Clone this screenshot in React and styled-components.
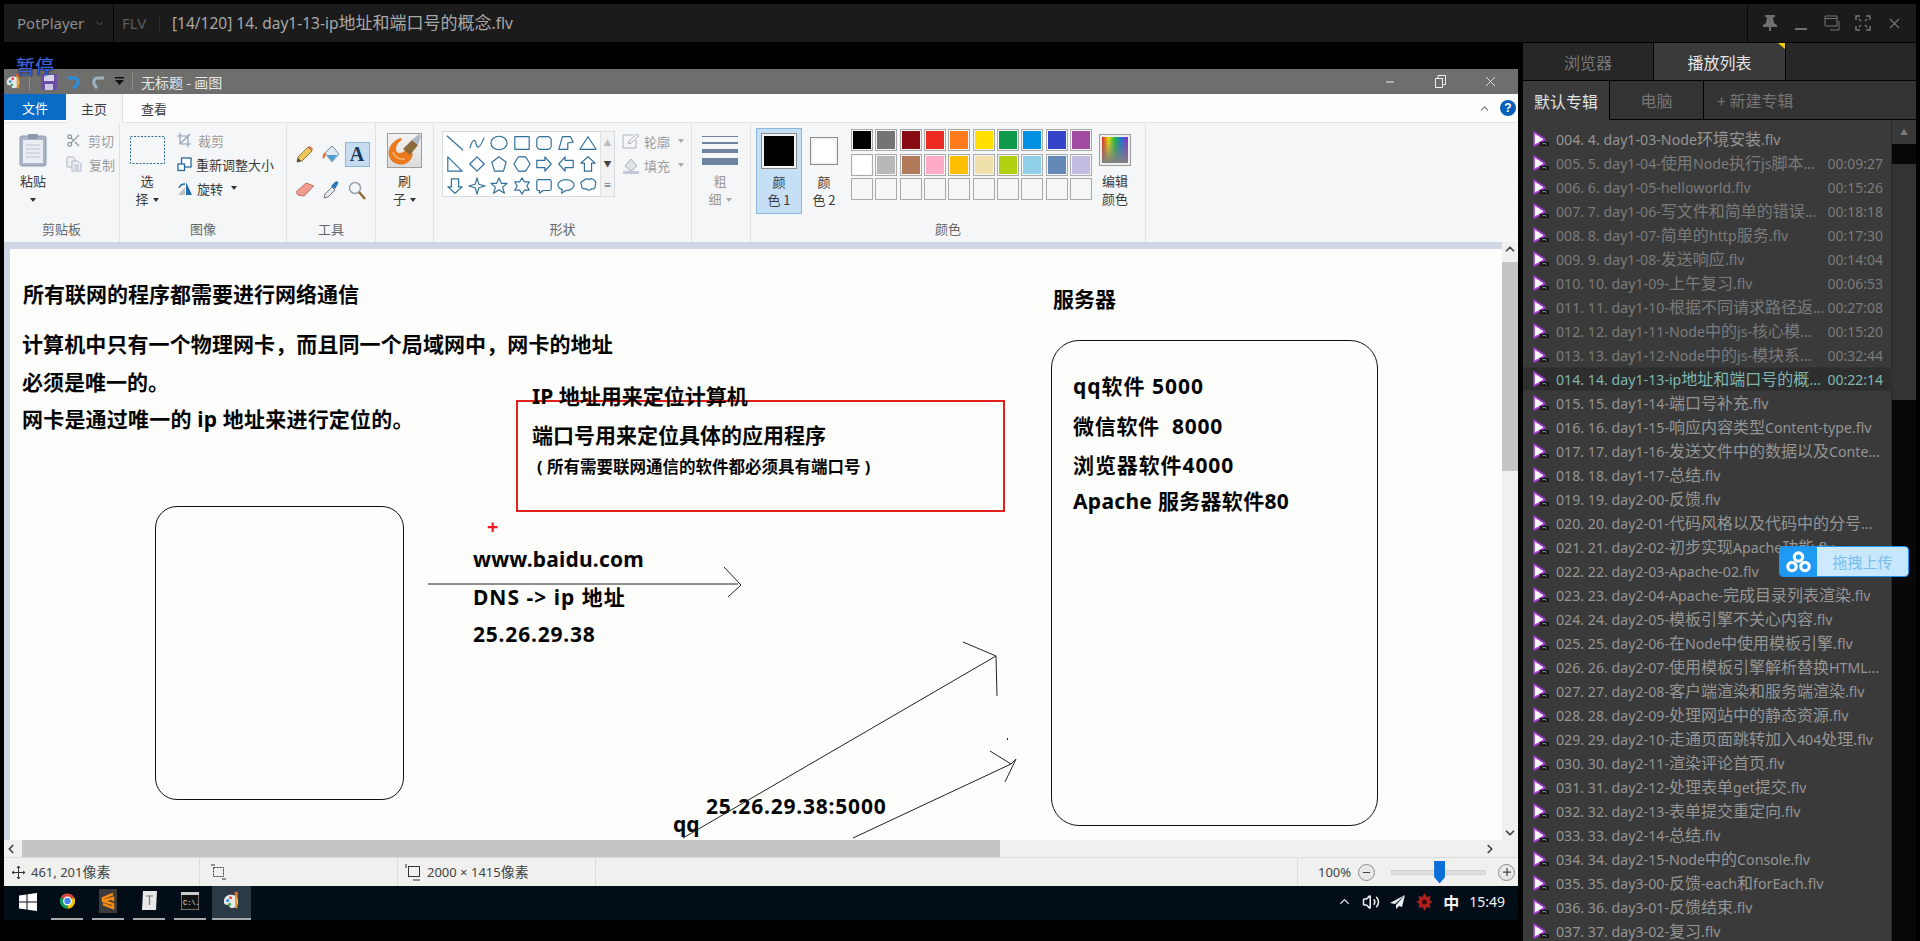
import React from 'react'
import styled, { createGlobalStyle } from 'styled-components'
import { ChevronUp, ChevronLeft, ChevronRight, ChevronDown, Volume2, Scissors, X, Minus, Plus } from 'lucide-react'

const cjk = `"Noto Sans", "Noto Sans CJK SC", sans-serif`
const han = `"Noto Sans CJK SC", sans-serif`

const GlobalStyle = createGlobalStyle`
  html, body { margin: 0; padding: 0; background: #000; }
  #root { width: 1920px; height: 941px; overflow: hidden; }
  * { box-sizing: border-box; }
`

const Player = styled.div`
  width: 1920px;
  height: 941px;
  background: #000;
  display: flex;
  flex-direction: column;
  position: relative;
  overflow: hidden;
  font-family: ${cjk};
`

const HanRun = styled.span`
  font-family: ${han};
  font-size: ${p => p.$size}px;
  line-height: 1;
`
// the original font draws chinese a little larger than latin at the same size
const Mixed = ({ text, size }) =>
  text.split(/([\u4e00-\u9fff]+)/).map((part, i) =>
    i % 2 ? <HanRun key={i} $size={size}>{part}</HanRun> : part
  )

/* player title bar */
const TopBar = styled.header`
  height: 38px;
  margin: 4px 4px 0;
  flex: none;
  background: #1b1b1b;
  display: flex;
  align-items: center;
  color: #a5a5a5;
`
const Brand = styled.div`
  width: 110px;
  height: 100%;
  padding-left: 13px;
  display: flex;
  align-items: center;
  gap: 10px;
  border-right: 1px solid #050505;
  font-size: 15px;
  color: #8e8e8e;
  svg { color: #666; }
`
const Format = styled.span`
  margin-left: 8px;
  width: 38px;
  font-size: 15px;
  color: #5c5c5c;
  border-right: 1px solid #2c2c2c;
  line-height: 15px;
`
const FileTitle = styled.span`
  margin-left: 12px;
  flex: 1;
  font-size: 15.5px;
  color: #a8a8a8;
`
const WindowButtons = styled.div`
  width: 169px;
  height: 100%;
  border-left: 1px solid #050505;
  display: flex;
  align-items: center;
  padding-left: 14px;
  gap: 15px;
  svg { display: block; }
`

const Main = styled.div`
  flex: 1;
  display: flex;
  min-height: 0;
`
const Stage = styled.main`
  width: 1523px;
  flex: none;
  padding: 27px 5px 0 4px;
`
const PauseLabel = styled.div`
  position: absolute;
  left: 16px;
  top: 53px;
  font-size: 19px;
  line-height: 26px;
  font-family: ${han};
  color: #3f63dc;
  text-shadow: 0 0 2px #10162c, 0 0 1px #10162c;
`

/* paint window */
const Paint = styled.div`
  width: 1514px;
  height: 852px;
  display: flex;
  flex-direction: column;
  font-family: ${han};
  font-size: 13px;
  color: #3c3c3c;
`
const PaintTitle = styled.div`
  height: 25px;
  flex: none;
  background: #6e6e6c;
  display: flex;
  align-items: center;
  padding: 0 3px 0 1px;
  color: #e6e6e6;
  svg { display: block; flex: none; }
`
const TitleSep = styled.span`
  width: 1px;
  height: 17px;
  background: #8d8d8b;
  margin: ${p => p.$m};
`
const PaintName = styled.span`
  flex: 1;
  font-size: 14px;
  margin-left: 8px;
`
const Caption = styled.div`
  width: 50px;
  display: flex;
  justify-content: center;
  align-items: center;
  color: #f0f0f0;
`
const MenuRow = styled.nav`
  height: 29px;
  flex: none;
  background: #fefefe;
  display: flex;
  border-bottom: 1px solid #e3e4e6;
  align-items: flex-start;
`
const FileTab = styled.div`
  width: 62px;
  height: 26px;
  background: #0b6cc6;
  color: #fff;
  display: flex;
  align-items: center;
  justify-content: center;
`
const MenuTab = styled.div`
  width: ${p => p.$w}px;
  height: 29px;
  display: flex;
  align-items: center;
  justify-content: center;
  background: ${p => (p.$on ? '#f5f6f7' : 'transparent')};
  margin-bottom: -1px;
  border-right: ${p => (p.$on ? '1px solid #dfe0e2' : 'none')};
`
const MenuSide = styled.div`
  margin-left: auto;
  height: 28px;
  padding-right: 2px;
  display: flex;
  align-items: center;
  gap: 9px;
  color: #777;
`
const Help = styled.span`
  width: 16px;
  height: 16px;
  border-radius: 50%;
  background: #0a5fb8;
  color: #fff;
  font: bold 12px/16px "Liberation Sans", sans-serif;
  text-align: center;
`
const Ribbon = styled.div`
  height: 119px;
  flex: none;
  background: #f5f6f7;
  display: flex;
`
const Group = styled.section`
  width: ${p => p.$w}px;
  flex: none;
  display: flex;
  flex-direction: column;
  border-right: 1px solid #e0e1e3;
`
const GroupBody = styled.div`
  flex: 1;
  display: flex;
  padding: ${p => p.$pad};
  min-height: 0;
`
const GroupLabel = styled.div`
  height: 26px;
  flex: none;
  text-align: center;
  line-height: 26px;
  color: #666;
`
const BigButton = styled.div`
  width: ${p => p.$w}px;
  margin-left: ${p => p.$ml || 0}px;
  flex: none;
  display: flex;
  flex-direction: column;
  align-items: center;
  line-height: 18px;
  color: ${p => (p.$dim ? '#9a9a9a' : '#3c3c3c')};
`
const BigIcon = styled.div`
  height: 44px;
  display: flex;
  align-items: center;
  justify-content: center;
  svg { display: block; }
`
const Caret = styled.i`
  display: inline-block;
  width: 0;
  height: 0;
  margin-left: ${p => p.$ml ?? 4}px;
  vertical-align: middle;
  border-left: 3px solid transparent;
  border-right: 3px solid transparent;
  border-top: 4px solid ${p => p.$c || '#333'};
`
const SmallCol = styled.div`
  margin: ${p => p.$m};
  display: flex;
  flex-direction: column;
`
const SmallButton = styled.div`
  height: 24px;
  display: flex;
  align-items: center;
  gap: 4px;
  white-space: nowrap;
  color: ${p => (p.$dim ? '#9b9b9b' : '#3c3c3c')};
  svg { display: block; flex: none; }
`
const ToolGrid = styled.div`
  display: grid;
  grid-template-columns: repeat(3, 26px);
  grid-auto-rows: 36px;
  place-items: center;
`
const TextTool = styled.div`
  width: 25px;
  height: 25px;
  background: #c6dcf0;
  border: 1px solid #8fb7da;
  color: #17395f;
  font: bold 20px/23px "Liberation Serif", serif;
  text-align: center;
`
const BrushBox = styled.div`
  width: 35px;
  height: 35px;
  border: 1px solid #9d9d9d;
  background: linear-gradient(#f2f2f2, #dcdcdc);
  svg { display: block; }
`
const Gallery = styled.div`
  width: 173px;
  height: 66px;
  display: flex;
  background: #fff;
  border: 1px solid #d8dadc;
  flex: none;
`
const ShapeGrid = styled.div`
  width: 157px;
  padding-left: 1px;
  display: grid;
  grid-template-columns: repeat(7, 22.2px);
  grid-auto-rows: 21.6px;
  place-items: center;
  svg { display: block; }
`
const GalleryScroll = styled.div`
  flex: 1;
  background: #f1f2f3;
  border-left: 1px solid #dfe0e2;
  display: flex;
  flex-direction: column;
  align-items: center;
  justify-content: space-around;
  color: #444;
  font-size: 8px;
  line-height: 10px;
`
const GalleryUp = styled.span`
  color: #bbb;
`
const SizeBars = styled.div`
  width: 36px;
  display: flex;
  flex-direction: column;
  gap: 5px;
`
const SizeBar = styled.i`
  display: block;
  height: ${p => p.$h}px;
  background: #6f84a3;
`
const ColorButton = styled.div`
  width: ${p => p.$w}px;
  height: 86px;
  flex: none;
  display: flex;
  flex-direction: column;
  align-items: center;
  line-height: 18px;
  border: 1px solid ${p => (p.$on ? '#8cb6db' : 'transparent')};
  background: ${p => (p.$on ? '#c5dff4' : 'transparent')};
`
const ColorWell = styled.i`
  display: block;
  width: ${p => p.$s}px;
  height: ${p => p.$s}px;
  background: ${p => p.$c};
  border: 2px solid #f4f4f4;
  outline: 1px solid #8a8a8a;
`
const Palette = styled.div`
  margin: 1px 0 0 5px;
  display: grid;
  grid-template-columns: repeat(10, 22px);
  grid-auto-rows: 22px;
  column-gap: 2.35px;
  row-gap: 2.6px;
  flex: none;
`
const Swatch = styled.i`
  display: block;
  border: 1px solid #aaa;
  padding: 1px;
  background: ${p => p.$c || '#f5f6f7'};
  background-clip: content-box;
`

/* drawing area */
const Workspace = styled.div`
  height: 598px;
  flex: none;
  display: flex;
`
const CanvasFrame = styled.div`
  flex: 1;
  min-width: 0;
  padding: 7px 0 0 6px;
  background: #cfd6e5;
`
const Canvas = styled.div`
  position: relative;
  width: 100%;
  height: 100%;
  background: #fdfdfb;
  overflow: hidden;
  color: #050505;
  font-family: ${cjk};
  font-weight: 700;
  font-size: 21px;
  line-height: 30px;
`
const Note = styled.div`
  position: absolute;
  left: ${p => p.$x - 10}px;
  top: ${p => p.$y - 250}px;
  transform: translateY(-50%);
  white-space: pre;
  font-size: ${p => p.$size || 21}px;
  letter-spacing: ${p => p.$ls || 0}px;
  color: ${p => p.$c || 'inherit'};
`
const Frame = styled.div`
  position: absolute;
  left: ${p => p.$x - 10}px;
  top: ${p => p.$y - 250}px;
  width: ${p => p.$w}px;
  height: ${p => p.$h}px;
  border: ${p => (p.$red ? '2px solid #e0201a' : '1px solid #111')};
  border-radius: ${p => p.$r || 0}px;
`
const Strokes = styled.svg`
  position: absolute;
  left: 0;
  top: 0;
  width: 100%;
  height: 100%;
`
const VScroll = styled.div`
  width: 16px;
  flex: none;
  background: #f0f0ee;
  display: flex;
  flex-direction: column;
  align-items: center;
  color: #444;
  svg { display: block; flex: none; }
`
const VThumb = styled.div`
  width: 100%;
  height: 209px;
  background: #c5c5c3;
  margin: 6px 0 auto;
`
const HScroll = styled.div`
  height: 17px;
  flex: none;
  display: flex;
  align-items: center;
  background: #f0f0ee;
  color: #444;
  padding-right: 21px;
  svg { display: block; flex: none; }
`
const HThumb = styled.div`
  width: 978px;
  height: 100%;
  margin: 0 auto 0 4px;
  background: #c5c5c3;
`
const StatusBar = styled.footer`
  height: 29px;
  flex: none;
  display: flex;
  background: #f0f0ee;
  border-top: 1px solid #dcdcda;
  color: #444;
  font-family: ${cjk};
  font-size: 13px;
`
const StatusCell = styled.div`
  width: ${p => p.$w}px;
  flex: none;
  display: flex;
  align-items: center;
  gap: 6px;
  padding-left: ${p => p.$pl}px;
  border-right: 1px solid #dcdcda;
  svg { display: block; flex: none; }
`
const ZoomBox = styled.div`
  flex: 1;
  display: flex;
  align-items: center;
  padding-left: 20px;
`
const ZoomRound = styled.span`
  width: 17px;
  height: 17px;
  margin: ${p => p.$m};
  flex: none;
  border-radius: 50%;
  border: 1px solid #8b8b8b;
  background: #e8e8e8;
  display: flex;
  align-items: center;
  justify-content: center;
  color: #444;
`
const SliderTrack = styled.div`
  position: relative;
  width: 95px;
  height: 5px;
  background: #dedede;
  border: 1px solid #d2d2d2;
`
const SliderKnob = styled.i`
  position: absolute;
  left: 42px;
  top: -10px;
  width: 11px;
  height: 23px;
  background: #0a6ed8;
  clip-path: polygon(0 0, 100% 0, 100% 72%, 50% 100%, 0 72%);
`

/* windows taskbar */
const TaskBar = styled.div`
  height: 34px;
  flex: none;
  background: #030d18;
  display: flex;
  align-items: stretch;
  color: #f2f2f2;
`
const StartButton = styled.div`
  width: 47px;
  display: flex;
  align-items: center;
  justify-content: center;
  svg { display: block; margin-bottom: 3px; }
`
const TaskItem = styled.div`
  width: ${p => (p.$on ? 39 : 32)}px;
  margin-right: ${p => (p.$on ? 0 : 9)}px;
  margin-left: ${p => (p.$on ? -3 : 0)}px;
  display: flex;
  align-items: center;
  justify-content: center;
  padding-bottom: 3px;
  background: ${p => (p.$on ? '#2b3a46' : 'transparent')};
  border-bottom: 2px solid #a7a9ab;
  svg { display: block; }
`
const Tray = styled.div`
  margin-left: auto;
  padding: 0 13px 3px 0;
  display: flex;
  align-items: center;
  gap: 10px;
  font-family: ${han};
  svg { display: block; }
`
const TrayText = styled.span`
  font-size: ${p => p.$size}px;
  font-weight: ${p => p.$bold || 400};
  font-family: ${cjk};
`

/* playlist */
const Panel = styled.aside`
  position: relative;
  width: 393px;
  flex: none;
  margin-top: 1px;
  display: flex;
  flex-direction: column;
  min-height: 0;
  font-family: ${cjk};
`
const TabRow = styled.div`
  height: 38px;
  flex: none;
  display: flex;
  gap: 1px;
  border-bottom: 1px solid #000;
  background: #000;
`
const PanelTab = styled.div`
  position: relative;
  width: ${p => p.$w}px;
  flex: ${p => (p.$w ? 'none' : 1)};
  background: ${p => (p.$on ? '#3a3a3a' : '#272727')};
  color: ${p => (p.$on ? '#e4e4e4' : '#777')};
  font-family: ${han};
  font-size: 16px;
  display: flex;
  align-items: center;
  justify-content: center;
`
const Corner = styled.i`
  position: absolute;
  right: 0;
  top: 0;
  width: 7px;
  height: 6px;
  background: #f0d000;
  clip-path: polygon(0 0, 100% 0, 100% 100%);
`
const SubTabRow = styled(TabRow)`
  height: 39px;
`
const SubTab = styled.div`
  width: ${p => p.$w}px;
  flex: ${p => (p.$w ? 'none' : 1)};
  background: ${p => (p.$on ? '#3a3a3a' : '#333')};
  color: ${p => (p.$on ? '#e4e4e4' : '#757575')};
  font-family: ${han};
  font-size: 16px;
  display: flex;
  align-items: center;
  justify-content: ${p => (p.$left ? 'flex-start' : 'center')};
  padding-left: ${p => (p.$left ? 13 : 0)}px;
  margin-bottom: ${p => (p.$on ? -1 : 0)}px;
`
const ListWrap = styled.div`
  flex: 1;
  display: flex;
  min-height: 0;
`
const Rows = styled.div`
  width: 369px;
  flex: none;
  background: #3a3a3a;
  border-right: 1px solid #2a2a2a;
  padding-top: 7px;
`
const Row = styled.div`
  height: 24px;
  display: flex;
  align-items: center;
  padding: 0 8px 0 10px;
  font-size: 14.2px;
  white-space: nowrap;
  color: ${p => (p.$state === 'now' ? '#7fb6b0' : p.$state === 'done' ? '#7a7a7a' : '#959595')};
  background: ${p => (p.$state === 'now' ? '#2e2e2e' : 'transparent')};
  box-shadow: ${p => (p.$state === 'now' ? 'inset 0 0 0 1px #333' : 'none')};
  svg { display: block; flex: none; }
`
const RowName = styled.span`
  flex: 1;
  margin-left: 7px;
`
const RowTime = styled.span`
  font-size: 14px;
`
const ListScroll = styled.div`
  flex: 1;
  background: #070707;
  display: flex;
  flex-direction: column;
`
const ListUp = styled.div`
  height: 24px;
  margin-bottom: 20px;
  background: #383838;
  color: #777;
  font-size: 8px;
  line-height: 24px;
  text-align: center;
`
const ListThumb = styled.div`
  height: 236px;
  background: #333;
`
const Uploader = styled.div`
  position: absolute;
  right: 7px;
  top: 503px;
  width: 130px;
  height: 31px;
  display: flex;
  border: 1px solid #1d96f2;
  border-radius: 4px;
  overflow: hidden;
`
const UploaderIcon = styled.div`
  width: 37px;
  background: #1e9af5;
  display: flex;
  align-items: center;
  justify-content: center;
  svg { display: block; }
`
const UploaderText = styled.div`
  flex: 1;
  background: linear-gradient(90deg, #cfeafd, #c4e6fd);
  color: #79bdf0;
  font-family: ${han};
  font-size: 15px;
  display: flex;
  align-items: center;
  justify-content: center;
`

/* icons */
const s = { stroke: '#2f6f98', strokeWidth: 1.3, fill: '#fafcfe', strokeLinejoin: 'round' }
const shapes = [
  <line x1="1" y1="2" x2="19" y2="18" {...s} />,
  <path d="M2 16C5 5 8 5 9 11s4 5 9-7" {...s} fill="none" />,
  <ellipse cx="10" cy="10" rx="9" ry="7.5" {...s} />,
  <rect x="2" y="3" width="16" height="14" {...s} />,
  <rect x="2" y="3" width="16" height="14" rx="4" {...s} />,
  <path d="M2 17 6 3h9l3 6-6 1v7z" {...s} />,
  <path d="M10 3l9 14H1z" {...s} />,
  <path d="M2 2l16 16H2z" {...s} />,
  <path d="M10 2l8 8-8 8-8-8z" {...s} />,
  <path d="M10 2l8 6-3 10H5L2 8z" {...s} />,
  <path d="M6 2h8l5 8-5 8H6l-5-8z" {...s} />,
  <path d="M2 6h9V2l7 8-7 8v-4H2z" {...s} />,
  <path d="M18 6H9V2l-7 8 7 8v-4h9z" {...s} />,
  <path d="M6 18V9H2l8-7 8 7h-4v9z" {...s} />,
  <path d="M6 2v9H2l8 7 8-7h-4V2z" {...s} />,
  <path d="M10 1l2 7 7 2-7 2-2 7-2-7-7-2 7-2z" {...s} />,
  <path d="M10 1l2.6 6H19l-5 4.3 2 6.7-6-3.8L4 18l2-6.7L1 7h6.4z" {...s} />,
  <path d="M10 1l2.7 4.5H18l-2.6 4.5 2.6 4.5h-5.3L10 19l-2.7-4.5H2L4.600 10 2 5.500h5.300z" {...s} />,
  <path d="M4 3h12a2 2 0 0 1 2 2v8a2 2 0 0 1-2 2H9l-4 3v-3H4a2 2 0 0 1-2-2V5a2 2 0 0 1 2-2z" {...s} />,
  <path d="M10 3c5 0 9 2.500 9 6s-4 6-9 6l-5 3 1-4C3 13 1 11 1 9c0-3.500 4-6 9-6z" {...s} />,
  <path d="M5 4c2-3 5-2 6-1 2-2 5-1 6 1 2 1 2 4 1 5 1 3-2 5-4 4-1 2-5 2-6 0-3 1-6-1-5-4-2-2-1-4 2-5z" {...s} />,
]

const palette = [
  '#000', '#747474', '#8a0a14', '#ee2b20', '#ff7b1c', '#ffdf00', '#0f9a4b', '#0090e4', '#3344c8', '#a04aa4',
  '#fff', '#b8b8b8', '#b0795a', '#ffabc6', '#ffbf00', '#eedfab', '#b0d012', '#8fcfe8', '#6488b8', '#c3bbe2',
  '', '', '', '', '', '', '', '', '', '',
]

const Clipboard = () => (
  <svg width="28" height="34" viewBox="0 0 28 34">
    <rect x="1" y="3" width="26" height="30" rx="2" fill="#aab4c6" stroke="#8e99ad" />
    <rect x="4" y="7" width="20" height="23" fill="#e9edf3" />
    <path d="M7 12h14M7 16h14M7 20h14M7 24h14" stroke="#b9c3d2" />
    <rect x="9" y="1" width="10" height="5" rx="1" fill="#8d97aa" />
  </svg>
)
const CopyIcon = () => (
  <svg width="16" height="16" viewBox="0 0 16 16" fill="#eef0f4" stroke="#aeb7c4">
    <path d="M1 1h6l2 2v8H1z" />
    <path d="M6 5h6l3 3v7H6z" />
    <path d="M8 9h5M8 11h5M8 13h5" />
  </svg>
)
const CropIcon = () => (
  <svg width="14" height="14" viewBox="0 0 14 14" fill="none" stroke="#8fa2b5" strokeWidth="1.2">
    <path d="M3 0v11h11M0 3h11v11M3 11 13 1" />
  </svg>
)
const ResizeIcon = () => (
  <svg width="15" height="15" viewBox="0 0 15 15" fill="#fff" stroke="#27689c" strokeWidth="1.3">
    <rect x="4.500" y="1" width="9.500" height="9" />
    <rect x="1" y="7" width="6.500" height="6.500" />
  </svg>
)
const RotateIcon = () => (
  <svg width="16" height="15" viewBox="0 0 16 15">
    <path d="M9 14V1l6 13z" fill="#1f6fb0" />
    <path d="M8 14V6L1 14z" fill="#c2c2c2" />
    <path d="M2 7c1-3 3-4 6-4" fill="none" stroke="#1f6fb0" strokeWidth="1.3" />
  </svg>
)
const Pencil = () => (
  <svg width="18" height="18" viewBox="0 0 18 18">
    <path d="M1 17l1-5L12 2l4 4L6 16z" fill="#eec65a" stroke="#8d7a45" />
    <path d="M12 2l2-1 3 3-1 2z" fill="#d9705a" />
    <path d="M1 17l1-4 3 3z" fill="#444" />
  </svg>
)
const Bucket = () => (
  <svg width="20" height="20" viewBox="0 0 20 20">
    <path d="M4 9 11 2l7 8-7 8z" fill="#dfe9f3" stroke="#6c8aa6" />
    <path d="M6 11h10l-5 6z" fill="#4b9ad0" />
    <path d="M5 8C2 9 1 12 2 15c2-1 3-3 3-7z" fill="#e9743b" />
  </svg>
)
const Eraser = () => (
  <svg width="20" height="16" viewBox="0 0 20 16">
    <path d="M1 10 11 1l8 3-10 10-6-1z" fill="#f49b8e" stroke="#b9766b" />
    <path d="M1 10l8 1 10-7" fill="none" stroke="#d9a399" />
  </svg>
)
const Dropper = () => (
  <svg width="18" height="20" viewBox="0 0 18 20">
    <path d="M2 18l1-4 7-7 3 3-7 7z" fill="#e4e8ec" stroke="#7c7c7c" />
    <path d="M9 6l4-4c2-2 4 0 3 2l-3 5z" fill="#2b76b8" />
  </svg>
)
const Magnifier = () => (
  <svg width="18" height="19" viewBox="0 0 18 19" fill="none">
    <circle cx="7" cy="7" r="5.500" stroke="#9aa2a9" strokeWidth="1.500" fill="#f4f8fb" />
    <path d="M11 11l6 7" stroke="#8f6a3e" strokeWidth="2.500" />
  </svg>
)
const Brush = () => (
  <svg width="33" height="33" viewBox="0 0 33 33">
    <path d="M13 4C5 6-1 14 1 22c2 7 10 10 16 8 5-2 7-6 8-10l-7-5c-2 4-7 5-9 3s-1-9 5-12z" fill="#ea7a1f" />
    <path d="M5 18c1 5 6 8 12 7" fill="none" stroke="#f7b06a" strokeWidth="1.500" />
    <path d="M15 15 24 6l6 5-8 10z" fill="#8b6a3c" />
    <path d="M24 6l7-6 2 2-3 9z" fill="#aeb6bf" />
  </svg>
)
const PlayIcon = () => (
  <svg width="16" height="16" viewBox="0 0 16 16">
    <path d="M1 1l11 7.500L1 15z" fill="#fff" stroke="#a43cd2" strokeWidth="1.600" strokeLinejoin="round" />
    <rect x="7" y="11" width="9" height="4" fill="#141414" />
    <path d="M9 13h1l1-1 1 1h2" stroke="#bbb" strokeWidth=".7" fill="none" />
  </svg>
)
const CrossMove = () => (
  <svg width="13" height="13" viewBox="0 0 13 13" stroke="#333" fill="none">
    <path d="M6.500 0v13M0 6.500h13M5 2l1.500-2L8 2M5 11l1.500 2L8 11M2 5 0 6.500 2 8M11 5l2 1.500L11 8" />
  </svg>
)
const SelIcon = () => (
  <svg width="15" height="17" viewBox="0 0 15 17" fill="none" stroke="#333">
    <rect x="2.500" y="3.500" width="10" height="9" strokeDasharray="2 1" />
    <path d="M0 1h4M11 15h4" />
  </svg>
)
const SizeIcon = () => (
  <svg width="16" height="17" viewBox="0 0 16 17" fill="none" stroke="#333">
    <rect x="3.500" y="2.500" width="11" height="10" />
    <path d="M1 0v4M8 16h7" />
  </svg>
)
const Chrome = () => (
  <svg width="17" height="20" viewBox="0 0 20 20">
    <path d="M10 10 2 6a9 9 0 0 1 16 0z" fill="#db4437" />
    <path d="M10 10 18 6a9 9 0 0 1-8 13z" fill="#f4c20d" />
    <path d="M10 10v9A9 9 0 0 1 2 6z" fill="#0f9d58" />
    <circle cx="10" cy="10" r="4.500" fill="#4285f4" stroke="#fff" strokeWidth="1.500" />
  </svg>
)
const Sublime = () => (
  <svg width="18" height="24" viewBox="0 0 18 24">
    <rect width="18" height="24" fill="#3b3b3b" />
    <path d="M14 5 4 9v3l10 3v4L4 15m10-3V9L4 12" stroke="#f38a12" strokeWidth="2.500" fill="none" />
  </svg>
)
const Typora = () => (
  <svg width="17" height="21" viewBox="0 0 17 21">
    <path d="M2 1h14l-1 19H1z" fill="#e8e8e8" />
    <path d="M5 6h7M8.500 6v9" stroke="#777" strokeWidth="1.200" />
  </svg>
)
const Cmd = () => (
  <svg width="18" height="18" viewBox="0 0 18 18">
    <rect width="18" height="18" fill="#111" stroke="#ccc" />
    <rect width="18" height="3" fill="#ccc" />
    <text x="2" y="13" fontSize="7" fill="#eee" fontFamily="Liberation Mono">C:\.</text>
  </svg>
)
const PaintApp = ({ size = 19 }) => (
  <svg width={size} height={size} viewBox="0 0 20 20">
    <path d="M2 11c0-5 4-7 8-7s7 3 7 7-3 7-7 7c-2 0-2-2-3-3s-5 1-5-4z" fill="#e6e8ec" />
    <circle cx="6" cy="10" r="1.600" fill="#2b8fd6" />
    <circle cx="9" cy="7" r="1.600" fill="#e2483c" />
    <circle cx="8" cy="14" r="1.600" fill="#3ca857" />
    <path d="M15 18V3" stroke="#e89b2a" strokeWidth="2.500" />
    <circle cx="15" cy="2.500" r="2" fill="#d9682a" />
  </svg>
)
const Flower = () => (
  <svg width="17" height="20" viewBox="0 0 17 20">
    <path d="M8.500 1l2 4 4-1-1 4 3 2-3 2 1 4-4-1-2 4-2-4-4 1 1-4-3-2 3-2-1-4 4 1z" fill="#b3201c" />
    <circle cx="8.500" cy="10" r="2.500" fill="#3a0a0a" />
  </svg>
)
const QuickSave = styled.svg`
  margin-left: ${p => p.$ml}px;
`

const tracks = [
  ['004. 4. day1-03-Node环境安装.flv', '', ''],
  ['005. 5. day1-04-使用Node执行js脚本...', '00:09:27', 'done'],
  ['006. 6. day1-05-helloworld.flv', '00:15:26', 'done'],
  ['007. 7. day1-06-写文件和简单的错误...', '00:18:18', 'done'],
  ['008. 8. day1-07-简单的http服务.flv', '00:17:30', 'done'],
  ['009. 9. day1-08-发送响应.flv', '00:14:04', 'done'],
  ['010. 10. day1-09-上午复习.flv', '00:06:53', 'done'],
  ['011. 11. day1-10-根据不同请求路径返...', '00:27:08', 'done'],
  ['012. 12. day1-11-Node中的js-核心模...', '00:15:20', 'done'],
  ['013. 13. day1-12-Node中的js-模块系...', '00:32:44', 'done'],
  ['014. 14. day1-13-ip地址和端口号的概...', '00:22:14', 'now'],
  ['015. 15. day1-14-端口号补充.flv'],
  ['016. 16. day1-15-响应内容类型Content-type.flv'],
  ['017. 17. day1-16-发送文件中的数据以及Conte...'],
  ['018. 18. day1-17-总结.flv'],
  ['019. 19. day2-00-反馈.flv'],
  ['020. 20. day2-01-代码风格以及代码中的分号...'],
  ['021. 21. day2-02-初步实现Apache功能.flv'],
  ['022. 22. day2-03-Apache-02.flv'],
  ['023. 23. day2-04-Apache-完成目录列表渲染.flv'],
  ['024. 24. day2-05-模板引擎不关心内容.flv'],
  ['025. 25. day2-06-在Node中使用模板引擎.flv'],
  ['026. 26. day2-07-使用模板引擎解析替换HTML...'],
  ['027. 27. day2-08-客户端渲染和服务端渲染.flv'],
  ['028. 28. day2-09-处理网站中的静态资源.flv'],
  ['029. 29. day2-10-走通页面跳转加入404处理.flv'],
  ['030. 30. day2-11-渲染评论首页.flv'],
  ['031. 31. day2-12-处理表单get提交.flv'],
  ['032. 32. day2-13-表单提交重定向.flv'],
  ['033. 33. day2-14-总结.flv'],
  ['034. 34. day2-15-Node中的Console.flv'],
  ['035. 35. day3-00-反馈-each和forEach.flv'],
  ['036. 36. day3-01-反馈结束.flv'],
  ['037. 37. day3-02-复习.flv'],
]

const notes = [
  ['所有联网的程序都需要进行网络通信', 23, 295],
  ['计算机中只有一个物理网卡，而且同一个局域网中，网卡的地址', 22, 345, 0.1],
  ['必须是唯一的。', 22, 383],
  ['网卡是通过唯一的 ip 地址来进行定位的。', 22, 420, 0.2],
  ['IP 地址用来定位计算机', 532, 397],
  ['端口号用来定位具体的应用程序', 532, 436],
  ['服务器', 1053, 300],
  ['qq软件 5000', 1073, 387, 1],
  ['微信软件  8000', 1073, 427, 0.7],
  ['浏览器软件4000', 1073, 466, 0.9],
  ['Apache 服务器软件80', 1073, 502, 0.3],
  ['www.baidu.com', 473, 560, 0.2],
  ['DNS -> ip 地址', 473, 598, 1],
  ['25.26.29.38', 473, 635, 0.8],
  ['25.26.29.38:5000', 706, 807, 0.8],
  ['qq', 673, 825],
]

const App = () => (
  <Player>
    <GlobalStyle />
    <TopBar>
      <Brand>PotPlayer <ChevronDown size={11} /></Brand>
      <Format>FLV</Format>
      <FileTitle><Mixed text="[14/120] 14. day1-13-ip地址和端口号的概念.flv" size={17} /></FileTitle>
      <WindowButtons>
        <svg width="16" height="18" viewBox="0 0 16 18" fill="#6f6f6f"><path d="M3 1h10v2h-2l1 6 3 2v2H1v-2l3-2 1-6H3zM7 13h2v4H7z" /></svg>
        <svg width="16" height="16" viewBox="0 0 16 16" fill="#6f6f6f"><rect x="2" y="13" width="12" height="2" /></svg>
        <svg width="16" height="16" viewBox="0 0 16 16" fill="none" stroke="#777"><path d="M1 1h12v10H1zM1 3.500h12" /><path d="M15 6v9H6" /></svg>
        <svg width="16" height="16" viewBox="0 0 16 16" fill="none" stroke="#777" strokeWidth="1.400"><path d="M1 5V1h4M11 1h4v4M15 11v4h-4M5 15H1v-4M4 4l2 2M12 4l-2 2M4 12l2-2M12 12l-2-2" /></svg>
        <X size={17} color="#777" strokeWidth={1.500} />
      </WindowButtons>
    </TopBar>

    <Main>
      <Stage>
        <Paint>
          <PaintTitle>
            <PaintApp size={17} />
            <TitleSep $m="0 11px 0 7px" />
            <svg width="16" height="16" viewBox="0 0 16 16"><rect width="16" height="16" fill="#6b4fa3" /><rect x="3" y="1" width="10" height="6" fill="#d8d2ea" /><rect x="4" y="10" width="8" height="6" fill="#cfc8e4" /></svg>
            <QuickSave $ml={9} width="16" height="16" viewBox="0 0 16 16" fill="none" stroke="#2a8fdc" strokeWidth="3"><path d="M2 4h7c4 0 5 7-2 10" /></QuickSave>
            <QuickSave $ml={8} width="16" height="16" viewBox="0 0 16 16" fill="none" stroke="#9fb2c0" strokeWidth="3"><path d="M14 4H8C3 4 2 10 7 14" /></QuickSave>
            <QuickSave $ml={9} width="9" height="9" viewBox="0 0 9 9" fill="#111"><path d="M0 0h9v1.500H0zM0 3h9L4.500 8z" /></QuickSave>
            <TitleSep $m="0 0 0 8px" />
            <PaintName>无标题 - 画图</PaintName>
            <Caption><Minus size={12} /></Caption>
            <Caption><svg width="11" height="13" viewBox="0 0 11 13" fill="none" stroke="#f0f0f0"><path d="M.5 3.500h7v9h-7zM3 3.500V.5h7.500v9H7.500" /></svg></Caption>
            <Caption><X size={17} strokeWidth={1.200} /></Caption>
          </PaintTitle>
          <MenuRow>
            <FileTab>文件</FileTab>
            <MenuTab $w={57} $on>主页</MenuTab>
            <MenuTab $w={62}>查看</MenuTab>
            <MenuSide>
              <ChevronUp size={13} />
              <Help>?</Help>
            </MenuSide>
          </MenuRow>
          <Ribbon>
            <Group $w={116}>
              <GroupBody $pad="5px 0 0 9px">
                <BigButton $w={40}>
                  <BigIcon><Clipboard /></BigIcon>
                  <span>粘贴</span>
                  <span><Caret $ml={0} /></span>
                </BigButton>
                <SmallCol $m="0 0 0 13px">
                  <SmallButton $dim><Scissors size={15} color="#8d98a8" />&nbsp;剪切</SmallButton>
                  <SmallButton $dim><CopyIcon />&nbsp;复制</SmallButton>
                </SmallCol>
              </GroupBody>
              <GroupLabel>剪贴板</GroupLabel>
            </Group>
            <Group $w={167}>
              <GroupBody $pad="5px 0 0 7px">
                <BigButton $w={40}>
                  <BigIcon><svg width="35" height="28" viewBox="0 0 35 28" fill="none"><rect x=".5" y=".5" width="34" height="27" stroke="#2b6c9b" strokeDasharray="2 1.500" /></svg></BigIcon>
                  <span>选</span>
                  <span>择<Caret /></span>
                </BigButton>
                <SmallCol $m="0 0 0 10px">
                  <SmallButton $dim><CropIcon />&nbsp;裁剪</SmallButton>
                  <SmallButton><ResizeIcon />重新调整大小</SmallButton>
                  <SmallButton><RotateIcon />旋转<Caret /></SmallButton>
                </SmallCol>
              </GroupBody>
              <GroupLabel>图像</GroupLabel>
            </Group>
            <Group $w={89}>
              <GroupBody $pad="13px 0 0 5px">
                <ToolGrid>
                  <Pencil />
                  <Bucket />
                  <TextTool>A</TextTool>
                  <Eraser />
                  <Dropper />
                  <Magnifier />
                </ToolGrid>
              </GroupBody>
              <GroupLabel>工具</GroupLabel>
            </Group>
            <Group $w={58}>
              <GroupBody $pad="5px 0 0 0">
                <BigButton $w={57}>
                  <BigIcon><BrushBox><Brush /></BrushBox></BigIcon>
                  <span>刷</span>
                  <span>子<Caret /></span>
                </BigButton>
              </GroupBody>
              <GroupLabel />
            </Group>
            <Group $w={258}>
              <GroupBody $pad="8px 0 0 8px">
                <Gallery>
                  <ShapeGrid>
                    {shapes.map((shape, i) => (
                      <svg key={i} width="18" height="18" viewBox="0 0 20 20">{shape}</svg>
                    ))}
                  </ShapeGrid>
                  <GalleryScroll>
                    <GalleryUp>▲</GalleryUp>
                    <span>▼</span>
                    <span>≡</span>
                  </GalleryScroll>
                </Gallery>
                <SmallCol $m="-2px 0 0 7px">
                  <SmallButton $dim>
                    <svg width="18" height="18" viewBox="0 0 18 18" fill="none" stroke="#a9b3be"><path d="M1 3h10M1 3v13h13V8" /><path d="M6 12l1-3 8-7 2 2-8 7z" /></svg>
                    轮廓<Caret $c="#aaa" />
                  </SmallButton>
                  <SmallButton $dim>
                    <svg width="18" height="18" viewBox="0 0 18 18"><path d="M3 10l6-7 6 7-6 5z" fill="#dfe4ea" stroke="#a4b1bd" /><rect x="1" y="15" width="16" height="3" fill="#c3ccd6" /></svg>
                    填充<Caret $c="#aaa" />
                  </SmallButton>
                </SmallCol>
              </GroupBody>
              <GroupLabel>形状</GroupLabel>
            </Group>
            <Group $w={59}>
              <GroupBody $pad="5px 0 0 0">
                <BigButton $w={56} $dim>
                  <BigIcon>
                    <SizeBars>
                      <SizeBar $h={1} />
                      <SizeBar $h={2} />
                      <SizeBar $h={4} />
                      <SizeBar $h={7} />
                    </SizeBars>
                  </BigIcon>
                  <span>粗</span>
                  <span>细<Caret $c="#aaa" /></span>
                </BigButton>
              </GroupBody>
              <GroupLabel />
            </Group>
            <Group $w={395}>
              <GroupBody $pad="5px 0 0 5px">
                <ColorButton $w={46} $on>
                  <BigIcon><ColorWell $s={34} $c="#000" /></BigIcon>
                  <span>颜</span>
                  <span>色 1</span>
                </ColorButton>
                <ColorButton $w={44}>
                  <BigIcon><ColorWell $s={26} $c="#fff" /></BigIcon>
                  <span>颜</span>
                  <span>色 2</span>
                </ColorButton>
                <Palette>
                  {palette.map((c, i) => <Swatch key={i} $c={c} />)}
                </Palette>
                <BigButton $w={40} $ml={3}>
                  <BigIcon>
                    <svg width="32" height="32" viewBox="0 0 32 32">
                      <defs>
                        <linearGradient id="rainbow" x1="0" y1="0" x2="1" y2="0">
                          <stop offset="0" stopColor="#e2211c" />
                          <stop offset=".25" stopColor="#e8e000" />
                          <stop offset=".5" stopColor="#18b848" />
                          <stop offset=".75" stopColor="#1a6fe0" />
                          <stop offset="1" stopColor="#a01fc0" />
                        </linearGradient>
                        <linearGradient id="fade" x1="0" y1="0" x2="0" y2="1">
                          <stop offset="0" stopColor="#808080" stopOpacity="0" />
                          <stop offset="1" stopColor="#808080" />
                        </linearGradient>
                      </defs>
                      <rect x=".5" y=".5" width="31" height="31" fill="#eee" stroke="#9c9c9c" />
                      <rect x="3" y="3" width="26" height="26" fill="url(#rainbow)" />
                      <rect x="3" y="3" width="26" height="26" fill="url(#fade)" />
                    </svg>
                  </BigIcon>
                  <span>编辑</span>
                  <span>颜色</span>
                </BigButton>
              </GroupBody>
              <GroupLabel>颜色</GroupLabel>
            </Group>
          </Ribbon>
          <Workspace>
            <CanvasFrame>
              <Canvas>
                <Frame $x={155} $y={507} $w={249} $h={294} $r={22} />
                <Frame $x={1051} $y={341} $w={327} $h={486} $r={28} />
                <Frame $red $x={516} $y={401} $w={489} $h={112} />
                {notes.map(([text, x, y, ls]) => <Note key={text} $x={x} $y={y} $ls={ls}>{text}</Note>)}
                <Note $x={537} $y={468} $size={16.500}>( 所有需要联网通信的软件都必须具有端口号 )</Note>
                <Note $x={487} $y={528} $size={20} $c="#ee1c1c">+</Note>
                <Strokes>
                  <g transform="translate(-10 -250)" fill="none" stroke="#222" strokeWidth="1">
                    <path d="M428 585H738M724 568l17 18-13 12" />
                    <path d="M683 839 996 657M963 643l33 14 1 40" />
                    <path d="M853 839 1011 765M990 752l21 13 5-5M1016 760l-11 23" />
                    <path d="M1007 740h1" strokeWidth="2" />
                  </g>
                </Strokes>
              </Canvas>
            </CanvasFrame>
            <VScroll>
              <ChevronUp size={14} strokeWidth={3} />
              <VThumb />
              <ChevronDown size={14} strokeWidth={3} />
            </VScroll>
          </Workspace>
          <HScroll>
            <ChevronLeft size={14} strokeWidth={3} />
            <HThumb />
            <ChevronRight size={14} strokeWidth={3} />
          </HScroll>
          <StatusBar>
            <StatusCell $w={196} $pl={8}><CrossMove /><span><Mixed text="461, 201像素" size={14} /></span></StatusCell>
            <StatusCell $w={198} $pl={11}><SelIcon /></StatusCell>
            <StatusCell $w={198} $pl={7}><SizeIcon /><span><Mixed text="2000 × 1415像素" size={14} /></span></StatusCell>
            <StatusCell $w={702} $pl={0} />
            <ZoomBox>
              100%
              <ZoomRound $m="0 16px 0 7px"><Minus size={11} strokeWidth={2.500} /></ZoomRound>
              <SliderTrack><SliderKnob /></SliderTrack>
              <ZoomRound $m="0 0 0 12px"><Plus size={12} strokeWidth={2.500} /></ZoomRound>
            </ZoomBox>
          </StatusBar>
          <TaskBar>
            <StartButton>
              <svg width="18" height="18" viewBox="0 0 18 18" fill="#fff"><path d="M0 2.500 7.500 1.500v7H0zM8.500 1.300 18 0v8.500H8.500zM0 9.500h7.500v7L0 15.500zM8.500 9.500H18V18l-9.500-1.300z" /></svg>
            </StartButton>
            <TaskItem><Chrome /></TaskItem>
            <TaskItem><Sublime /></TaskItem>
            <TaskItem><Typora /></TaskItem>
            <TaskItem><Cmd /></TaskItem>
            <TaskItem $on><PaintApp /></TaskItem>
            <Tray>
              <ChevronUp size={15} />
              <Volume2 size={18} />
              <svg width="16" height="16" viewBox="0 0 16 16" fill="#eee"><path d="M15 1 0 9l5 1zM15 1 6 11v4l3-3 3 1z" /></svg>
              <Flower />
              <TrayText $size={16} $bold={700}>中</TrayText>
              <TrayText $size={14}>15:49</TrayText>
            </Tray>
          </TaskBar>
        </Paint>
      </Stage>

      <Panel>
        <TabRow>
          <PanelTab $w={130}>浏览器</PanelTab>
          <PanelTab $w={131} $on>播放列表<Corner /></PanelTab>
          <PanelTab />
        </TabRow>
        <SubTabRow>
          <SubTab $w={86} $on>默认专辑</SubTab>
          <SubTab $w={93}>电脑</SubTab>
          <SubTab $left>+ 新建专辑</SubTab>
        </SubTabRow>
        <ListWrap>
          <Rows>
            {tracks.map(([name, time, state]) => (
              <Row key={name} $state={state}>
                <PlayIcon />
                <RowName><Mixed text={name} size={16} /></RowName>
                <RowTime>{time}</RowTime>
              </Row>
            ))}
          </Rows>
          <ListScroll>
            <ListUp>▲</ListUp>
            <ListThumb />
          </ListScroll>
        </ListWrap>
        <Uploader>
          <UploaderIcon>
            <svg width="25" height="22" viewBox="0 0 25 22" fill="none" stroke="#fff" strokeWidth="3.200">
              <circle cx="12.500" cy="6" r="4.200" />
              <circle cx="6" cy="15.500" r="4.200" />
              <circle cx="19" cy="15.500" r="4.200" />
            </svg>
          </UploaderIcon>
          <UploaderText>拖拽上传</UploaderText>
        </Uploader>
      </Panel>
    </Main>
    <PauseLabel>暂停</PauseLabel>
  </Player>
)

export default App
